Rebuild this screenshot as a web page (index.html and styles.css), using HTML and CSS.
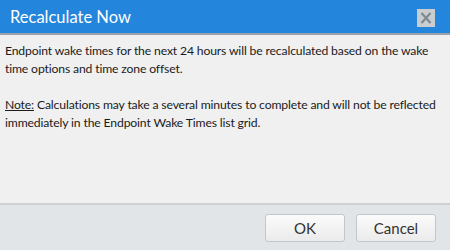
FILE: index.html
```html
<!DOCTYPE html>
<html lang="en">
<head>
    <meta charset="UTF-8">
    <title>Recalculate Now</title>
    <link rel="stylesheet" href="styles.css">
</head>
<body>
    <div class="dialog">
        <div class="dialog-header">
            <span class="dialog-title">Recalculate Now</span>
            <button class="close-btn" title="Close">
                <svg width="12" height="12" viewBox="0 0 12 12">
                    <path d="M1.5 1 L10.5 11 M10.5 1 L1.5 11" stroke="#7c8a92" stroke-width="2.2" fill="none"/>
                </svg>
            </button>
        </div>
        <div class="dialog-body">
            <p>Endpoint wake times for the next 24 hours will be recalculated based on the wake time options and time zone offset.</p>
            <p><span class="note">Note:</span> Calculations may take a several minutes to complete and will not be reflected immediately in the Endpoint Wake Times list grid.</p>
        </div>
        <div class="dialog-footer">
            <button class="btn">OK</button>
            <button class="btn">Cancel</button>
        </div>
    </div>
</body>
</html>
```

FILE: styles.css
```css
body {
    margin: 0;
    padding: 0;
    font-family: Lato, "Open Sans", sans-serif;
    background-color: #f0f0f0;
}
.dialog {
    width: 450px;
    height: 250px;
    display: flex;
    flex-direction: column;
}
.dialog-header {
    height: 33px;
    background-color: #2385dc;
    border-bottom: 2px solid #9aa3aa;
    display: flex;
    align-items: center;
    justify-content: space-between;
    padding: 0 15px 0 10px;
}
.dialog-title {
    color: #fff;
    font-size: 16.5px;
}
.close-btn {
    width: 18px;
    height: 18px;
    padding: 0;
    margin-top: 3px;
    border: none;
    background-color: #c9cdd0;
    display: flex;
    align-items: center;
    justify-content: center;
}
.dialog-body {
    flex: 1;
    padding: 7px 0 0 5px;
    font-size: 12.2px;
    letter-spacing: -0.15px;
    line-height: 18px;
    color: #1b1b1b;
    border-bottom: 2px solid #cfd2d4;
}
.dialog-body p {
    margin: 0 0 18px 0;
}
.note {
    text-decoration: underline;
}
.dialog-footer {
    height: 45px;
    background-color: #e1e5e8;
    display: flex;
    justify-content: flex-end;
    align-items: flex-start;
    gap: 11px;
    padding: 9px 14px 0 0;
    box-sizing: border-box;
}
.btn {
    width: 80px;
    height: 28px;
    font-family: Lato, "Open Sans", sans-serif;
    font-size: 15px;
    color: #333;
    border: 1px solid #c4c7c9;
    border-radius: 3px;
    background: linear-gradient(#fbfbfb, #ebebeb);
}
```
